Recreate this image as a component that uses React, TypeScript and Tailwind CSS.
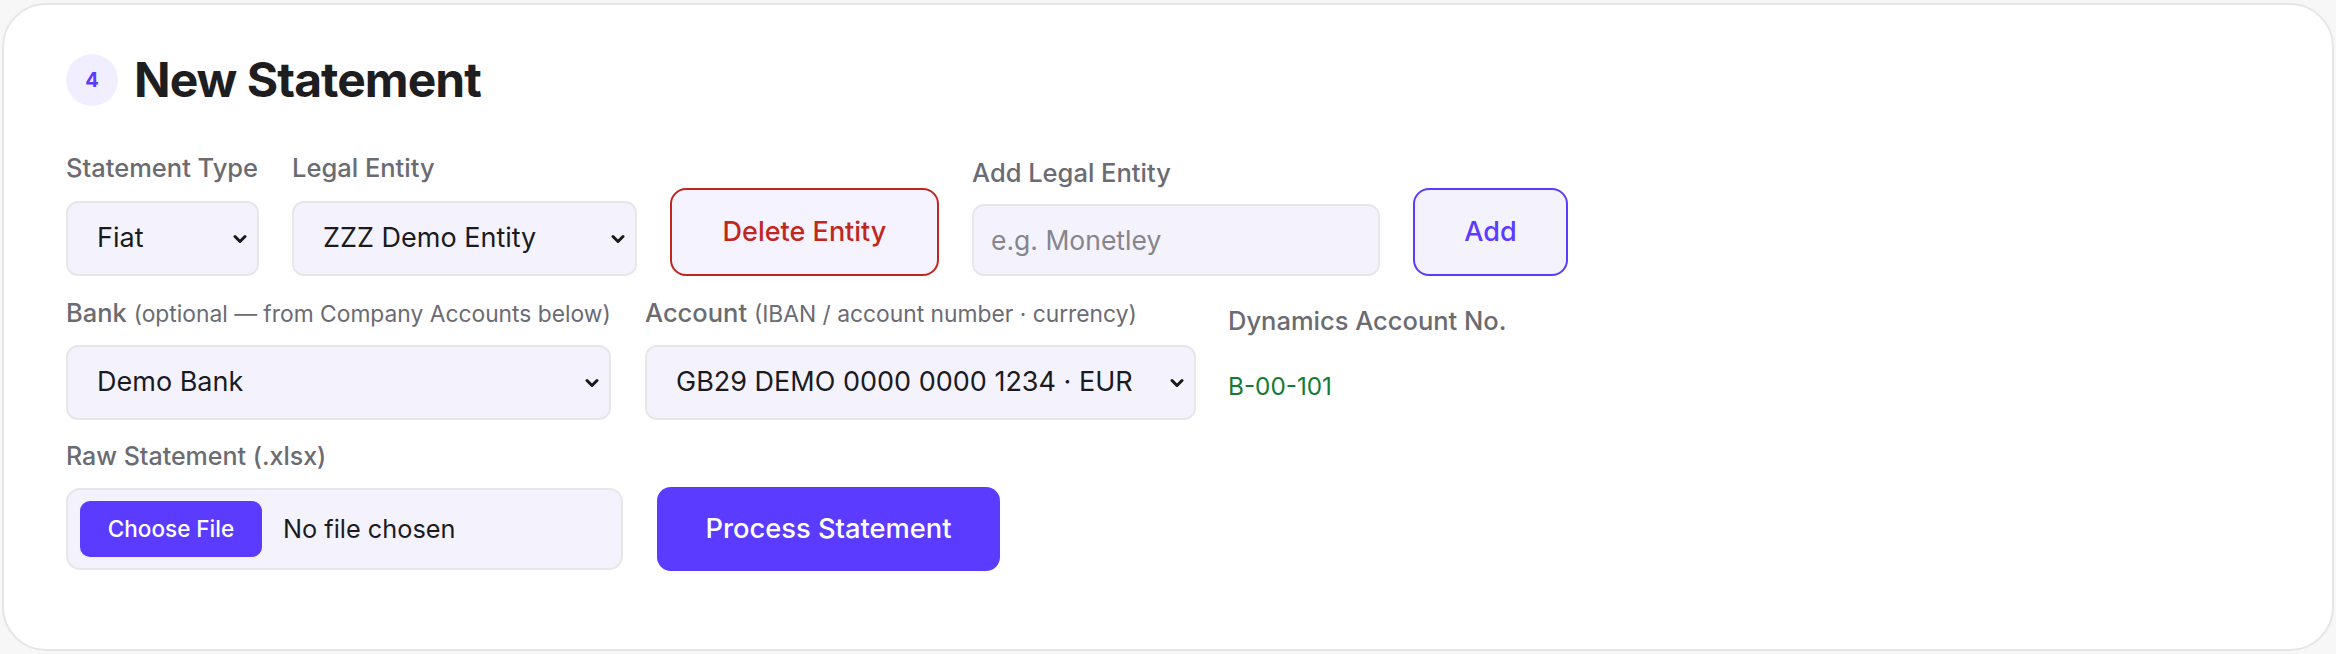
import React from "react";

const Chevron = () => (
  <svg
    className="pointer-events-none absolute right-[12px] top-1/2 -translate-y-1/2"
    width="14"
    height="10"
    viewBox="0 0 14 10"
    fill="none"
  >
    <path d="M2 2.5 L7 7.5 L12 2.5" stroke="#1a1a1a" strokeWidth="3" strokeLinecap="round" strokeLinejoin="round" />
  </svg>
);

type SelectProps = { value: string; options: string[]; width: string; height?: string };

const Select = ({ value, options, width, height = "h-[75px]" }: SelectProps) => (
  <div className={`relative ${width} ${height}`}>
    <select
      defaultValue={value}
      className="h-full w-full appearance-none rounded-[12px] border-2 border-[#e7e7ea] bg-[#f4f3fd] pl-[29px] pr-[36px] text-[27px] text-[#1b1b1f] outline-none"
    >
      {options.map((o) => (
        <option key={o}>{o}</option>
      ))}
    </select>
    <Chevron />
  </div>
);

const Label = ({
  children,
  className = "",
  size = "text-[25.5px]",
}: {
  children: React.ReactNode;
  className?: string;
  size?: string;
}) => (
  <label className={`block ${size} leading-[28px] font-medium text-[#6b6b72] ${className}`}>{children}</label>
);

export default function App() {
  return (
    <div
      className="h-[654px] w-full bg-[#f7f7f8] px-[2px] pt-[3px] pb-[3px]"
      style={{ fontFamily: "Inter, 'Noto Sans', sans-serif" }}
    >
      <div className="h-[648px] rounded-[44px] border-2 border-[#e6e6e8] bg-white pl-[62px] pt-[49px]">
        {/* header */}
        <div className="flex items-center gap-[16px]">
          <div className="flex h-[52px] w-[52px] items-center justify-center rounded-full bg-[#f1eeff] text-[20px] font-bold text-[#5b3bff]">
            4
          </div>
          <h2 className="text-[48px] leading-none font-bold tracking-[-0.02em] text-[#1e1e21]">New Statement</h2>
        </div>

        {/* entity row */}
        <div className="mt-[48px] flex items-end gap-[33px]">
          <div>
            <Label className="mb-[19px]">Statement Type</Label>
            <Select value="Fiat" options={["Fiat", "Crypto"]} width="w-[193px]" />
          </div>
          <div>
            <Label className="mb-[19px]">Legal Entity</Label>
            <Select value="ZZZ Demo Entity" options={["ZZZ Demo Entity"]} width="w-[345px]" />
          </div>
          <button className="h-[88px] w-[269px] rounded-[16px] border-2 border-[#c1281d] bg-[#f5f3ff] text-[27px] font-medium text-[#c1281d]">
            Delete Entity
          </button>
          <div>
            <Label className="mb-[17px]">Add Legal Entity</Label>
            <input
              placeholder="e.g. Monetley"
              className="h-[72px] w-[408px] rounded-[12px] border-2 border-[#e7e7ea] bg-[#f4f3fd] pl-[17px] text-[26.5px] text-[#1b1b1f] outline-none placeholder:text-[#85858b]"
            />
          </div>
          <button className="h-[88px] w-[155px] rounded-[16px] border-2 border-[#5b3bff] bg-[#f4f3fd] text-[27px] font-medium text-[#5b3bff]">
            Add
          </button>
        </div>

        {/* bank row */}
        <div className="mt-[23px] flex items-start">
          <div>
            <Label className="mb-[17px]">
              Bank <span className="text-[22.8px] font-normal">(optional — from Company Accounts below)</span>
            </Label>
            <Select value="Demo Bank" options={["Demo Bank"]} width="w-[545px]" />
          </div>
          <div className="ml-[34px]">
            <Label className="mb-[17px]">
              Account <span className="text-[22.8px] font-normal">(IBAN / account number · currency)</span>
            </Label>
            <Select value="GB29 DEMO 0000 0000 1234 · EUR" options={["GB29 DEMO 0000 0000 1234 · EUR"]} width="w-[551px]" />
          </div>
          <div className="ml-[32px] pt-[8px]">
            <Label>Dynamics Account No.</Label>
            <div className="mt-[37px] text-[24.3px] leading-[28px] text-[#157a33]">B-00-101</div>
          </div>
        </div>

        {/* upload row */}
        <div className="mt-[22px] flex items-end gap-[34px]">
          <div>
            <Label className="mb-[18px]" size="text-[25px]">
              Raw Statement (.xlsx)
            </Label>
            <div className="flex h-[82px] w-[557px] items-center rounded-[14px] border-2 border-[#e7e7ea] bg-[#f4f3fd] pl-[12px]">
              <button className="h-[56px] w-[182px] rounded-[10px] bg-[#5b3bff] text-[22.5px] font-medium text-white">
                Choose File
              </button>
              <span className="ml-[21px] text-[25.3px] text-[#1b1b1f]">No file chosen</span>
            </div>
          </div>
          <button className="mb-[-1px] h-[84px] w-[343px] rounded-[14px] bg-[#5b3bff] text-[27.3px] font-medium text-white">
            Process Statement
          </button>
        </div>
      </div>
    </div>
  );
}
